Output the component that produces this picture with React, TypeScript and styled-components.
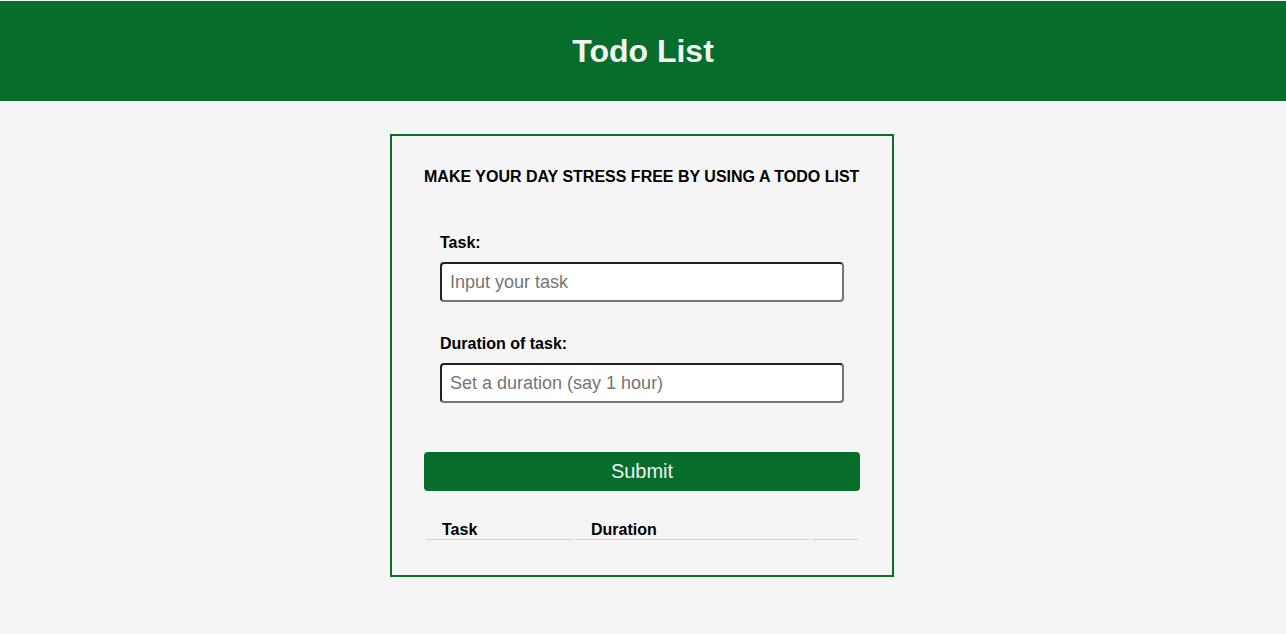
import * as React from 'react'
import styled, { createGlobalStyle } from 'styled-components'

const GREEN = '#066d2a'

const GlobalStyle = createGlobalStyle`
    body {
        margin: 0;
        padding-top: 1px;
        background-color: #f5f5f5;
        font-family: 'Liberation Sans', Arial, sans-serif;
        color: #000;
    }
    * {
        box-sizing: border-box;
    }
`

const Header = styled.header`
    height: 100px;
    background-color: ${GREEN};
    display: flex;
    align-items: center;
    justify-content: center;
`

const Title = styled.h1`
    margin: 0;
    font-size: 32px;
    font-weight: bold;
    color: #f4f4f4;
`

const Card = styled.main`
    width: 504px;
    margin: 33px 0 0 calc(50% - 253px);
    border: 2px solid ${GREEN};
    padding: 32px 32px 33px;
`

const Heading = styled.h2`
    margin: 0;
    font-size: 16px;
    line-height: 18px;
    font-weight: bold;
    text-transform: uppercase;
`

const Form = styled.form`
    display: flex;
    flex-direction: column;
    margin-top: 48px;
`

const Field = styled.div`
    display: flex;
    flex-direction: column;
    gap: 10px;
    padding: 0 16px;
    margin-bottom: 33px;
`

const Label = styled.label`
    font-size: 16px;
    line-height: 18px;
    font-weight: bold;
`

const Input = styled.input`
    height: 40px;
    width: 100%;
    padding: 0 8px;
    font-family: inherit;
    font-size: 18px;
    background: #fff;
    border: 2px solid;
    border-color: #222 #767676 #767676 #222;
    border-radius: 4px;
    outline: none;

    &::placeholder {
        color: #757575;
    }
`

const SubmitButton = styled.button`
    margin-top: 16px;
    height: 39px;
    width: 100%;
    border: none;
    border-radius: 4px;
    background-color: ${GREEN};
    color: #f0f0f0;
    font-family: inherit;
    font-size: 20px;
    cursor: pointer;
`

const Table = styled.table`
    margin-top: 28px;
    width: 100%;
    table-layout: fixed;
    border-collapse: separate;
    border-spacing: 2px;
`

const Th = styled.th<{ $w: number }>`
    width: ${(p) => p.$w}px;
    padding: 0 16px;
    text-align: left;
    font-size: 16px;
    line-height: 18px;
    font-weight: bold;
    border-bottom: 1px solid #cfcfcf;
`

export default function App() {
    return (
        <>
            <GlobalStyle />
            <Header>
                <Title>Todo List</Title>
            </Header>
            <Card>
                <Heading>Make your day stress free by using a todo list</Heading>
                <Form onSubmit={(e) => e.preventDefault()}>
                    <Field>
                        <Label htmlFor="task">Task:</Label>
                        <Input id="task" placeholder="Input your task" />
                    </Field>
                    <Field>
                        <Label htmlFor="duration">Duration of task:</Label>
                        <Input id="duration" placeholder="Set a duration (say 1 hour)" />
                    </Field>
                    <SubmitButton type="submit">Submit</SubmitButton>
                </Form>
                <Table>
                    <thead>
                        <tr>
                            <Th $w={147}>Task</Th>
                            <Th $w={235}>Duration</Th>
                            <Th $w={46}></Th>
                        </tr>
                    </thead>
                </Table>
            </Card>
        </>
    )
}
